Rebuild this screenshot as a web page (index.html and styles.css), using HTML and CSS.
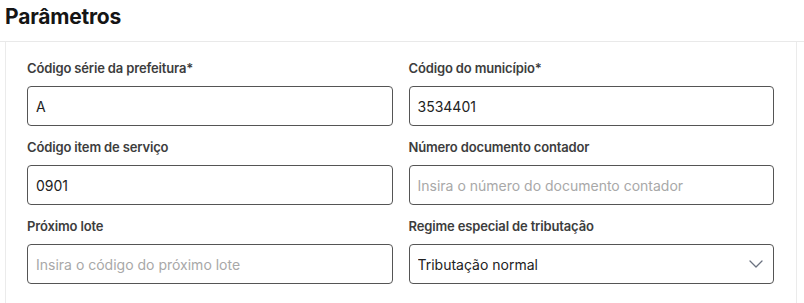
FILE: index.html
```html
<!DOCTYPE html>
<html lang="pt-BR">
<head>
  <meta charset="UTF-8" />
  <meta name="viewport" content="width=device-width, initial-scale=1.0" />
  <title>Parâmetros</title>
  <link rel="stylesheet" href="styles.css">
</head>
<body>
  <header class="page-header">
    <h1>Parâmetros</h1>
  </header>

  <section class="card">
    <div class="form-grid">
      <div class="field">
        <label for="codSerie">Código série da prefeitura*</label>
        <input type="text" id="codSerie" value="A" />
      </div>
      <div class="field">
        <label for="codMunicipio">Código do município*</label>
        <input type="text" id="codMunicipio" value="3534401" />
      </div>
      <div class="field">
        <label for="codItem">Código item de serviço</label>
        <input type="text" id="codItem" value="0901" />
      </div>
      <div class="field">
        <label for="numDoc">Número documento contador</label>
        <input type="text" id="numDoc" placeholder="Insira o número do documento contador" />
      </div>
      <div class="field">
        <label for="proxLote">Próximo lote</label>
        <input type="text" id="proxLote" placeholder="Insira o código do próximo lote" />
      </div>
      <div class="field">
        <label for="regime">Regime especial de tributação</label>
        <div class="select-wrap">
          <select id="regime">
            <option>Tributação normal</option>
            <option>Microempresa municipal</option>
            <option>Estimativa</option>
            <option>Sociedade de profissionais</option>
          </select>
          <svg class="chevron" width="14" height="8" viewBox="0 0 14 8" fill="none">
            <path d="M1 1l6 6 6-6" stroke="#6b7280" stroke-width="1.3" stroke-linecap="round" stroke-linejoin="round"/>
          </svg>
        </div>
      </div>
    </div>
  </section>
</body>
</html>
```

FILE: styles.css
```css
body {
  margin: 0;
  font-family: Inter, 'Noto Sans', sans-serif;
  background-color: #ffffff;
  color: #222222;
}
.page-header {
  height: 41px;
  border-bottom: 1px solid #e9e9e9;
  box-sizing: content-box;
}
.page-header h1 {
  margin: 0;
  padding: 4px 0 0 5px;
  font-size: 21px;
  line-height: 26px;
  font-weight: 700;
  color: #151515;
  letter-spacing: -0.2px;
}
.card {
  margin: 0 7px 0 5px;
  border-left: 1px solid #ebebeb;
  border-right: 1px solid #ebebeb;
  padding: 17px 22px 20px 21px;
}
.form-grid {
  display: grid;
  grid-template-columns: 1fr 1fr;
  column-gap: 16px;
  row-gap: 12px;
}
.field {
  display: flex;
  flex-direction: column;
  gap: 9px;
}
.field label {
  font-size: 13px;
  line-height: 18px;
  font-weight: 600;
  color: #3d3d3d;
  letter-spacing: -0.15px;
}
.field input,
.field select {
  box-sizing: border-box;
  width: 100%;
  height: 40px;
  padding: 0 8px;
  border: 1px solid #555555;
  border-radius: 4px;
  background: #ffffff;
  font-family: inherit;
  font-size: 14px;
  color: #222222;
  outline: none;
}
.field input::placeholder {
  color: #a8a8a8;
}
.select-wrap {
  position: relative;
}
.field select {
  appearance: none;
  -webkit-appearance: none;
  padding-right: 36px;
}
.chevron {
  position: absolute;
  right: 11px;
  top: 16px;
  pointer-events: none;
}
```
